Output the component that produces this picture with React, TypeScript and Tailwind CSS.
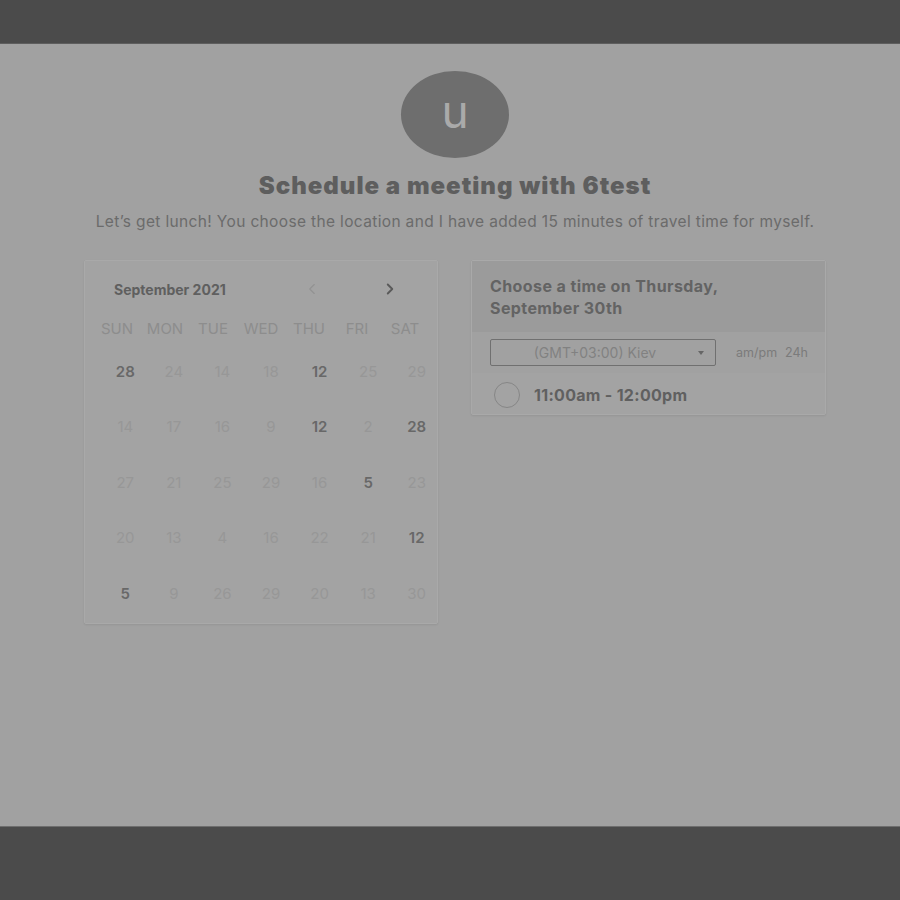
import { ChevronLeft, ChevronRight } from "lucide-react";

const WEEKDAYS = ["SUN", "MON", "TUE", "WED", "THU", "FRI", "SAT"];

// [day, available]
const WEEKS: [number, boolean][][] = [
  [[28, true], [24, false], [14, false], [18, false], [12, true], [25, false], [29, false]],
  [[14, false], [17, false], [16, false], [9, false], [12, true], [2, false], [28, true]],
  [[27, false], [21, false], [25, false], [29, false], [16, false], [5, true], [23, false]],
  [[20, false], [13, false], [4, false], [16, false], [22, false], [21, false], [12, true]],
  [[5, true], [9, false], [26, false], [29, false], [20, false], [13, false], [30, false]],
];

function Calendar() {
  return (
    <div className="w-[354px] h-[364px] bg-[#a3a3a3] border border-[#a9a9a9] rounded-[2px] shadow-[0_1px_2px_rgba(0,0,0,0.08)] pt-[20px] px-[8px]">
      <div className="flex items-center h-[16px] pl-[21px]">
        <span className="text-[14px] font-bold text-[#5f5f5f] w-[187px]">
          September 2021
        </span>
        <ChevronLeft size={18} strokeWidth={1.5} className="text-[#929292] ml-[2px]" />
        <ChevronRight size={18} strokeWidth={2.5} className="text-[#5a5a5a] ml-[60px]" />
      </div>

      <div className="grid grid-cols-7 mt-[21px] text-[15px] text-[#8d8d8d]">
        {WEEKDAYS.map((d) => (
          <div key={d} className="text-center">
            {d}
          </div>
        ))}
      </div>

      <div className="mt-[20px] ml-[8px] w-[340px]">
        {WEEKS.map((week, i) => (
          <div key={i} className="grid grid-cols-7 h-[55.5px] items-start">
            {week.map(([day, ok], j) => (
              <div
                key={j}
                className={`text-center text-[15px] ${
                  ok ? "font-semibold text-[#686868]" : "text-[#979797]"
                }`}
              >
                {day}
              </div>
            ))}
          </div>
        ))}
      </div>
    </div>
  );
}

function TimePanel() {
  return (
    <div className="w-[355px] bg-[#a3a3a3] border border-[#a9a9a9] rounded-[2px] shadow-[0_1px_2px_rgba(0,0,0,0.08)]">
      <div className="bg-[#9b9b9b] h-[71px] px-[18px] pt-[14px]">
        <h2 className="text-[16px] leading-[22px] font-bold text-[#636363] tracking-[0.4px]">
          Choose a time on Thursday,
          <br />
          September 30th
        </h2>
      </div>
      <div className="flex items-center h-[41px] pl-[18px] pr-[17px] bg-[#a1a1a1]">
        <div className="relative w-[226px] h-[27px] border border-[#707070] rounded-[2px] flex items-center justify-center text-[14px] text-[#818181]">
          <span className="mr-[16px]">(GMT+03:00) Kiev</span>
          <span className="absolute right-[11px] top-[11px] w-0 h-0 border-l-[3.5px] border-r-[3.5px] border-t-[4px] border-l-transparent border-r-transparent border-t-[#666]" />
        </div>
        <div className="ml-auto text-[12.5px] text-[#7b7b7b] flex gap-[8px] pt-[2px]">
          <span>am/pm</span>
          <span>24h</span>
        </div>
      </div>
      <div className="flex items-center h-[41px] pl-[22px] pt-[3px]">
        <span className="w-[26px] h-[26px] rounded-full border-[1.5px] border-[#868686]" />
        <span className="ml-[14px] text-[16px] font-bold text-[#606060] tracking-[0.3px]">
          11:00am - 12:00pm
        </span>
      </div>
    </div>
  );
}

export default function App() {
  return (
    <div
      className="w-[900px] h-[900px] flex flex-col bg-[#4b4b4b]"
      style={{ fontFamily: "Inter, 'Liberation Sans', sans-serif" }}
    >
      <div className="h-[44px] border-b border-[#5e5e5e]" />
      <div className="h-[782px] bg-[#a1a1a1] flex flex-col items-center pl-[10px]">
        <div className="mt-[27px] w-[108px] h-[87px] rounded-[50%] bg-[#6e6e6e] flex items-center justify-center">
          <span className="text-[46px] leading-none text-[#aaaaaa] -mt-[8px]">u</span>
        </div>
        <h1 className="mt-[13px] text-[24px] leading-[30px] font-black text-[#5e5e5e] tracking-[1px]">
          Schedule a meeting with 6test
        </h1>
        <p className="mt-[9px] text-[15.5px] text-[#6b6b6b] tracking-[0.35px]">
          Let’s get lunch! You choose the location and I have added 15 minutes of travel time for myself.
        </p>
        <div className="mt-[27px] w-[742px] flex justify-between items-start">
          <Calendar />
          <TimePanel />
        </div>
      </div>
      <div className="flex-1 border-t border-[#6e6e6e]" />
    </div>
  );
}
